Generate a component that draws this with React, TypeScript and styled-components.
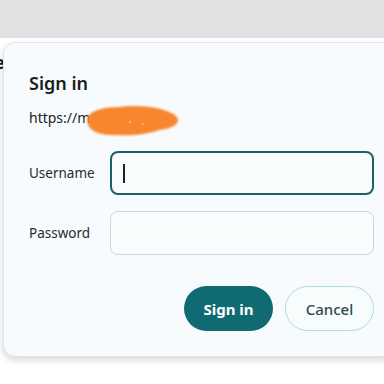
import React from 'react'
import styled, { createGlobalStyle } from 'styled-components'

const GlobalStyle = createGlobalStyle`
  html, body {
    margin: 0;
    padding: 0;
    background: #ffffff;
    font-family: "Noto Sans", "Open Sans", sans-serif;
    overflow: hidden;
  }
`

const Page = styled.div`
  position: relative;
  width: 384px;
  height: 384px;
  overflow: hidden;
  background: #ffffff;
`
const TopBar = styled.div`
  height: 38px;
  background: #e1e1e3;
`
const PageText = styled.div`
  margin: 12px 0 0 -6px;
  font-size: 18px;
  font-weight: 700;
  color: #1a1a1a;
`
const Dialog = styled.div`
  position: absolute;
  left: 3px;
  top: 42px;
  width: 398px;
  height: 315px;
  box-sizing: border-box;
  padding: 28px 26px 0 25px;
  background: #f7fbfd;
  border: 1px solid #e2e4e6;
  border-radius: 12px;
  box-shadow: 0 3px 7px rgba(0, 0, 0, 0.16);
  display: flex;
  flex-direction: column;
`
const Title = styled.h1`
  margin: 0;
  font-size: 18px;
  line-height: 24px;
  font-weight: 600;
  color: #1c1c1c;
`
const Origin = styled.div`
  display: flex;
  align-items: center;
  margin-top: 10px;
  height: 24px;
  font-size: 14px;
  color: #242424;
`
const Form = styled.div`
  display: grid;
  grid-template-columns: 81px 1fr;
  row-gap: 16px;
  align-items: center;
  margin-top: 22px;
`
const Label = styled.label`
  font-size: 13.5px;
  color: #2a2a2a;
`
const Field = styled.div<{ $focused?: boolean }>`
  height: 44px;
  box-sizing: border-box;
  border-radius: 8px;
  background: #f9fcfd;
  border: ${({ $focused }) => ($focused ? '2px solid #1b6165' : '1px solid #cdd3d6')};
  display: flex;
  align-items: center;
  padding-left: ${({ $focused }) => ($focused ? '11px' : '12px')};
`
const Caret = styled.span`
  width: 1.5px;
  height: 19px;
  background: #222;
`
const Actions = styled.div`
  display: flex;
  justify-content: flex-end;
  gap: 12px;
  margin-top: 31px;
`
const Button = styled.button<{ $primary?: boolean }>`
  width: 89px;
  height: 45px;
  border-radius: 23px;
  font-family: inherit;
  font-size: 15px;
  font-weight: ${({ $primary }) => ($primary ? 700 : 500)};
  color: ${({ $primary }) => ($primary ? '#ffffff' : '#2e4b4f')};
  background: ${({ $primary }) => ($primary ? '#0f6a71' : '#f7fcfd')};
  border: ${({ $primary }) => ($primary ? 'none' : '1.5px solid #b3dadd')};
  cursor: pointer;
`
const Redacted = styled.svg`
  flex-shrink: 0;
  margin-left: -5px;
  margin-top: 8px;
`

const Scribble = () => (
  <Redacted width="96" height="34" viewBox="0 0 96 34">
    <defs>
      <filter id="soft">
        <feGaussianBlur stdDeviation="1.3" />
      </filter>
    </defs>
    <g filter="url(#soft)" fill="#f7862f">
      <path d="M3 12 C8 6 20 3 34 3 C48 1 64 2 76 5 C86 8 94 12 93 17 C92 22 84 25 74 26 C64 30 48 32 34 31 C20 32 9 29 5 24 C2 20 2 15 3 12 Z" />
    </g>
    <circle cx="45" cy="18" r="1.2" fill="#f9b27a" />
    <circle cx="58" cy="20" r="1" fill="#f9b27a" />
  </Redacted>
)

const App = () => {
  return (
    <Page>
      <GlobalStyle />
      <TopBar />
      <PageText>e</PageText>
      <Dialog>
        <Title>Sign in</Title>
        <Origin>
          https://m
          <Scribble />
        </Origin>
        <Form>
          <Label>Username</Label>
          <Field $focused>
            <Caret />
          </Field>
          <Label>Password</Label>
          <Field />
        </Form>
        <Actions>
          <Button $primary>Sign in</Button>
          <Button>Cancel</Button>
        </Actions>
      </Dialog>
    </Page>
  )
}

export default App
